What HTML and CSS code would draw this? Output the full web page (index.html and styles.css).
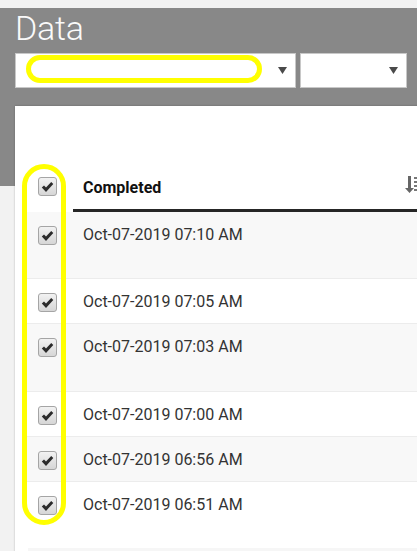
FILE: index.html
```html
<!DOCTYPE html>
<html>
<head>
<meta charset="utf-8">
<link rel="stylesheet" href="styles.css">
</head>
<body>
<header class="top">
  <h1 class="title">Data</h1>
  <div class="selects">
    <div class="select wide"><svg class="caret" width="9" height="7" viewBox="0 0 9 7"><path d="M0 0H9L4.5 7Z" fill="#4a4a4a"/></svg></div>
    <div class="select narrow"><svg class="caret" width="9" height="7" viewBox="0 0 9 7"><path d="M0 0H9L4.5 7Z" fill="#4a4a4a"/></svg></div>
  </div>
</header>

<main class="card">
  <div class="table">
    <div class="thead">
      <div class="cbcell"><span class="cb"><svg width="13" height="12" viewBox="0 0 13 12"><path d="M0.8 6.6L3 4.5L5 6.5L10.2 1L12.3 3.1L5 10.9Z" fill="#2b2b2b"/></svg></span></div>
      <div class="th">
        <span>Completed</span>
        <svg class="sort" width="16" height="18" viewBox="0 0 16 18"><path d="M3 0H6V12H9L4.5 17L0 12H3Z" fill="#666"/><rect x="9" y="1" width="3" height="2" fill="#777"/><rect x="9" y="5" width="3" height="2" fill="#777"/><rect x="9" y="9" width="3" height="2" fill="#777"/><rect x="9" y="13" width="3" height="2" fill="#777"/></svg>
      </div>
    </div>

    <div class="row odd tall">
      <div class="cbcell"><span class="cb"><svg width="13" height="12" viewBox="0 0 13 12"><path d="M0.8 6.6L3 4.5L5 6.5L10.2 1L12.3 3.1L5 10.9Z" fill="#2b2b2b"/></svg></span></div>
      <div class="td">Oct-07-2019 07:10 AM</div>
    </div>
    <div class="row">
      <div class="cbcell"><span class="cb"><svg width="13" height="12" viewBox="0 0 13 12"><path d="M0.8 6.6L3 4.5L5 6.5L10.2 1L12.3 3.1L5 10.9Z" fill="#2b2b2b"/></svg></span></div>
      <div class="td">Oct-07-2019 07:05 AM</div>
    </div>
    <div class="row odd taller">
      <div class="cbcell"><span class="cb"><svg width="13" height="12" viewBox="0 0 13 12"><path d="M0.8 6.6L3 4.5L5 6.5L10.2 1L12.3 3.1L5 10.9Z" fill="#2b2b2b"/></svg></span></div>
      <div class="td">Oct-07-2019 07:03 AM</div>
    </div>
    <div class="row">
      <div class="cbcell"><span class="cb"><svg width="13" height="12" viewBox="0 0 13 12"><path d="M0.8 6.6L3 4.5L5 6.5L10.2 1L12.3 3.1L5 10.9Z" fill="#2b2b2b"/></svg></span></div>
      <div class="td">Oct-07-2019 07:00 AM</div>
    </div>
    <div class="row odd">
      <div class="cbcell"><span class="cb"><svg width="13" height="12" viewBox="0 0 13 12"><path d="M0.8 6.6L3 4.5L5 6.5L10.2 1L12.3 3.1L5 10.9Z" fill="#2b2b2b"/></svg></span></div>
      <div class="td">Oct-07-2019 06:56 AM</div>
    </div>
    <div class="row last">
      <div class="cbcell"><span class="cb"><svg width="13" height="12" viewBox="0 0 13 12"><path d="M0.8 6.6L3 4.5L5 6.5L10.2 1L12.3 3.1L5 10.9Z" fill="#2b2b2b"/></svg></span></div>
      <div class="td">Oct-07-2019 06:51 AM</div>
    </div>
    <div class="tfoot"></div>
  </div>
</main>

<div class="mark mark-select"></div>
<div class="mark mark-column"></div>
</body>
</html>
```

FILE: styles.css
```css
html, body {
  margin: 0;
  padding: 0;
}
body {
  position: relative;
  width: 417px;
  height: 551px;
  overflow: hidden;
  background: #f2f2f2;
  font-family: Roboto, "Liberation Sans", Arial, sans-serif;
}
.top {
  background: #888888;
  padding: 0 10px 98px 15px;
}
.title {
  margin: 8px 0 0 0;
  font-size: 34px;
  line-height: 40px;
  font-weight: 300;
  color: #fafafa;
  letter-spacing: -0.2px;
}
.selects {
  display: flex;
  gap: 4px;
  margin-top: 5px;
}
.select {
  box-sizing: border-box;
  height: 35px;
  background: #fff;
  border: 1px solid #c8c8c8;
  display: flex;
  align-items: center;
  justify-content: flex-end;
  padding-right: 8px;
}
.select.wide { width: 281px; }
.select.narrow { width: 107px; }
.caret { display: block; }

.card {
  margin: -80px 0 0 15px;
  width: 420px;
  height: 460px;
  background: #fff;
  box-shadow: 0 0 2px rgba(0, 0, 0, 0.25);
  padding: 60px 0 0 12px;
  box-sizing: border-box;
}
.table {
  display: flex;
  flex-direction: column;
}
.thead {
  display: flex;
  height: 46px;
}
.cbcell {
  width: 46px;
  flex: none;
  box-sizing: border-box;
  padding-left: 11px;
}
.thead .cbcell {
  display: flex;
  align-items: center;
  padding-bottom: 5px;
}
.cb {
  box-sizing: border-box;
  width: 19px;
  height: 19px;
  border: 1px solid #a5a5a5;
  border-radius: 3px;
  background: linear-gradient(#f2f2f2, #d6d6d6);
  display: flex;
  align-items: center;
  justify-content: center;
}
.cb svg { display: block; }
.th {
  flex: 1;
  display: flex;
  align-items: center;
  justify-content: space-between;
  padding: 0 14px 0 10px;
  border-bottom: 3px solid #262626;
  font-size: 16px;
  font-weight: 700;
  color: #111;
}
.sort { display: block; margin-top: -6px; }

.row {
  display: flex;
  align-items: flex-start;
  height: 45px;
  box-sizing: border-box;
  border-top: 1px solid #ececec;
  background: #fff;
}
.thead + .row { border-top: none; }
.row.odd { background: #f8f8f8; }
.row.tall { height: 66px; }
.row.taller { height: 68px; }
.row .cbcell { padding-top: 14px; }
.td {
  padding: 13px 0 0 10px;
  font-size: 16px;
  line-height: 20px;
  color: #333;
}
.tfoot {
  margin-top: 22px;
  height: 10px;
  background: #f6f6f6;
  margin-left: 1px;
}

.mark {
  position: absolute;
  box-sizing: border-box;
  border: 5px solid #ffff00;
}
.mark-select {
  left: 26px;
  top: 55px;
  width: 236px;
  height: 28px;
  border-radius: 14px;
}
.mark-column {
  left: 22px;
  top: 164px;
  width: 44px;
  height: 361px;
  border-radius: 22px;
}
```
